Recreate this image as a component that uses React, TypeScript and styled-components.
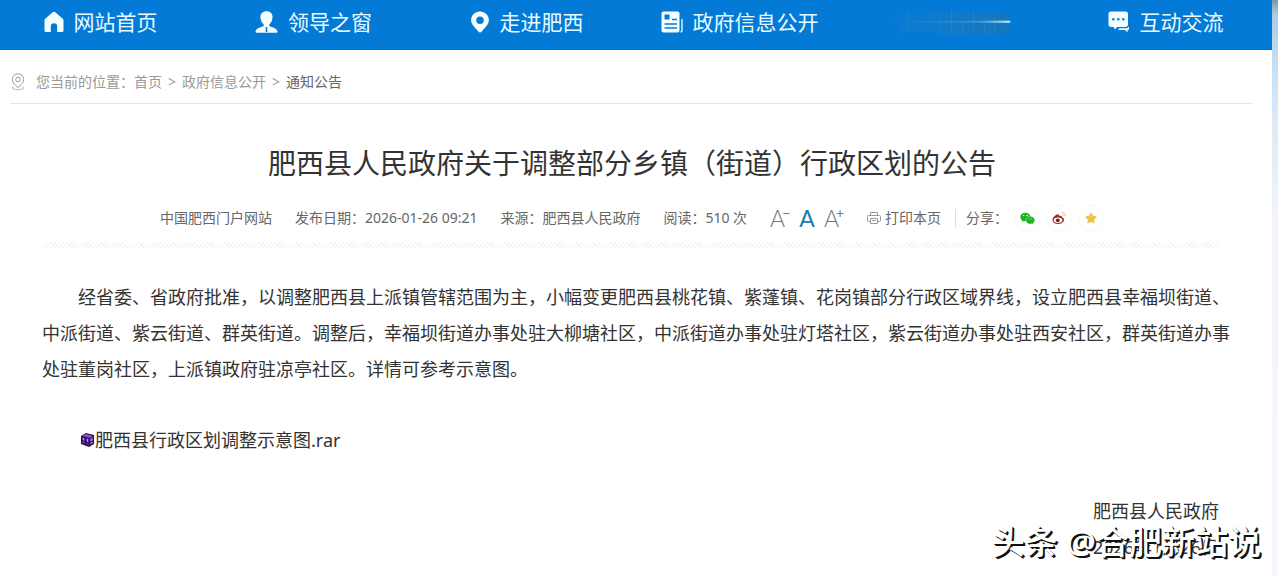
import React from "react";
import styled, { createGlobalStyle } from "styled-components";
import { FaWeixin, FaStar } from "react-icons/fa";

const GlobalStyle = createGlobalStyle`
  * { box-sizing: border-box; }
  body {
    margin: 0;
    background: #fff;
    color: #333;
    font-family: "Noto Sans", "Noto Sans CJK SC", sans-serif;
  }
  a { color: inherit; text-decoration: none; }
`;

const Shell = styled.div`
  position: relative;
  min-height: 100vh;
  padding-right: 6px;
  overflow: hidden;
  background: linear-gradient(#7f95a8 0, #a9cbe6 14px, #c4def2 60px, #dceaf7 120px, #f1f5fb 220px, #f5f7fc 100%);
`;

const Page = styled.div`
  min-height: 100vh;
  background: #fff;
`;

const NavBar = styled.nav`
  height: 50px;
  background: #047ad7;
  border-bottom: 1px solid #0a6fc2;
`;

const NavList = styled.ul`
  display: grid;
  grid-template-columns: repeat(6, 1fr);
  height: 44px;
  margin: 0 0 0 -6px;
  padding: 0;
  list-style: none;
`;

const NavItem = styled.li`
  display: flex;
  align-items: center;
  justify-content: center;
`;

const NavLink = styled.a`
  display: flex;
  align-items: center;
  gap: 10px;
  color: #e9fbff;
  font-size: 21px;
  line-height: 44px;
  white-space: nowrap;

  svg { display: block; flex: none; }
`;

const Breadcrumb = styled.div`
  display: flex;
  align-items: center;
  gap: 6px;
  height: 54px;
  margin: 0 19px 0 10px;
  padding-top: 10px;
  border-bottom: 1px solid #e6e6e6;
  color: #999;
  font-size: 14px;
  line-height: 20px;

  svg { margin-right: 4px; }
`;

const Current = styled.span`
  color: #666;
`;

const Article = styled.article`
  padding: 39px 42px 0;
`;

const Title = styled.h1`
  margin: 0;
  padding-right: 8px;
  text-align: center;
  font-size: 28px;
  font-weight: 400;
  line-height: 40px;
`;

const Meta = styled.div`
  display: flex;
  align-items: center;
  justify-content: center;
  gap: 23px;
  height: 30px;
  margin-top: 20px;
  padding-right: 8px;
  color: #666;
  font-size: 14px;
  line-height: 20px;
  white-space: nowrap;
`;

const Group = styled.div<{ $gap: number }>`
  display: flex;
  align-items: center;
  gap: ${(p) => p.$gap}px;
`;

const SizeButton = styled.button<{ $active?: boolean }>`
  display: flex;
  align-items: flex-start;
  padding: 0;
  border: 0;
  background: none;
  color: ${(p) => (p.$active ? "#1580b0" : "#777")};
  font-family: Lato, sans-serif;
  font-size: 23px;
  font-weight: ${(p) => (p.$active ? 400 : 300)};
  line-height: 24px;

  sup {
    margin-left: -3px;
    font-size: 14px;
    font-weight: 400;
    line-height: 14px;
  }
`;

const PrintButton = styled.button`
  display: flex;
  align-items: center;
  gap: 4px;
  padding: 0;
  border: 0;
  background: none;
  color: inherit;
  font: inherit;
`;

const Share = styled.div`
  display: flex;
  align-items: center;
  padding-left: 11px;
  background: linear-gradient(#ddd, #ddd) left center / 1px 18px no-repeat;
`;

const ShareLink = styled.a<{ $color: string }>`
  display: grid;
  place-items: center;
  width: 26px;
  height: 26px;
  margin-left: 6px;
  border: 1px solid #f8f8f8;
  border-radius: 50%;
  color: ${(p) => p.$color};
`;

const Hatch = styled.div`
  height: 6px;
  margin: 9px 10px 0 0;
  background: repeating-linear-gradient(45deg, #f1f1f1 0 1px, #fff 1px 3px);
`;

const Body = styled.div`
  padding-top: 31px;
  font-size: 18px;
  line-height: 36px;
`;

const Paragraph = styled.p`
  margin: 0 0 35px;
  text-indent: 36px;
`;

const Attachment = styled.p`
  display: flex;
  align-items: center;
  margin: 0 0 35px 38px;
`;

const Signature = styled.div`
  padding-right: 11px;
  text-align: right;
`;

const Watermark = styled.div`
  position: absolute;
  right: 17px;
  bottom: 10px;
  color: #fff;
  font-size: 33px;
  font-weight: 500;
  line-height: 48px;
  white-space: nowrap;
  text-shadow: 1px 1px 0 #111, 2px 2px 0 #111;
`;

const HomeIcon = () => (
  <svg width="20" height="22" viewBox="0 0 20 22" fill="#f4feff" aria-hidden="true">
    <path d="M8.700 1.200a2 2 0 0 1 2.600 0l7.500 6.500c.5.500.7.900.7 1.500V19.500a1.500 1.500 0 0 1-1.500 1.500H13.200v-5.500a3.200 3.200 0 0 0-6.400 0V21H2A1.500 1.500 0 0 1 .5 19.500V9.200c0-.6.2-1 .7-1.500z" />
  </svg>
);

const PersonIcon = () => (
  <svg width="23" height="24" viewBox="0 0 24 24" aria-hidden="true">
    <path fill="#f4feff" d="M12 .8c4 0 6.600 2.800 6.300 6.600-.2 3-1.400 5.500-3.300 6.900v2c1 1 7.600 1.700 8.400 5.400.2.800-.1 1.500-.9 1.500h-21c-.8 0-1.100-.7-.9-1.500C1.400 18 8 17.300 9 16.300v-2C7.100 12.900 5.900 10.400 5.700 7.400 5.400 3.600 8 .8 12 .8z" />
    <path fill="#047ad7" d="m11.200 17.200h1.600l.2 1.200-.5.700.6 2.600-1.100 1.200-1.100-1.200.6-2.600-.5-.7z" />
  </svg>
);

const PinIcon = () => (
  <svg width="20" height="22" viewBox="0 0 20 22" fill="#f4feff" fillRule="evenodd" aria-hidden="true">
    <path d="M10 .5c5 0 8.900 3.800 8.900 8.600 0 4.300-3.700 7.300-7.300 11.600-1 1.100-2.200 1.100-3.200 0C4.800 16.400 1.100 13.400 1.100 9.100 1.100 4.300 5 .5 10 .5zm0 5a3.800 3.800 0 1 0 0 7.600 3.800 3.800 0 0 0 0-7.600z" />
  </svg>
);

const NewsIcon = () => (
  <svg width="22" height="22" viewBox="0 0 22 22" aria-hidden="true">
    <rect x="0.500" y="0.500" width="18" height="21" rx="2" fill="#f4feff" />
    <path d="M21 8v11.500c0 .9-.6 1.500-1.600 1.700" fill="none" stroke="#f4feff" strokeWidth="1.300" />
    <rect x="3.500" y="3.500" width="5" height="5" fill="#047ad7" />
    <path d="M11 8.500h5M3.500 13h12.500M3.500 17h12.500" stroke="#047ad7" strokeWidth="1.600" />
  </svg>
);

const ChatIcon = () => (
  <svg width="22" height="22" viewBox="0 0 22 22" aria-hidden="true">
    <path fill="#f4feff" d="M3 .5h14.500c1.500 0 2.500 1 2.500 2.500v10.500c0 1.500-1 2.500-2.500 2.500H9l-2 2.500L5.500 16H3C1.500 16 .5 15 .5 13.500V3C.5 1.500 1.500.5 3 .5z" />
    <path fill="#f4feff" d="M21 7v10.500c0 1-.6 1.500-1.500 1.500v2.500L17 19h-7l1.500-1.800h6.500c2 0 3-1 3-3z" />
    <g fill="#047ad7">
      <circle cx="5.300" cy="8.300" r="1.200" />
      <circle cx="10.300" cy="8.300" r="1.200" />
      <circle cx="15.300" cy="8.300" r="1.200" />
    </g>
  </svg>
);

const SmearedLabel = () => (
  <svg width="124" height="30" viewBox="0 0 124 30" aria-hidden="true">
    <defs>
      <linearGradient id="haze" x1="0" x2="1" y1="0" y2="0">
        <stop offset="0" stopColor="#2f82b4" stopOpacity="0.100" />
        <stop offset="0.600" stopColor="#2878ac" stopOpacity="0.450" />
        <stop offset="1" stopColor="#1a74b4" stopOpacity="0.700" />
      </linearGradient>
      <linearGradient id="streak" x1="0" x2="1" y1="0" y2="0">
        <stop offset="0" stopColor="#4aa0e0" stopOpacity="0.100" />
        <stop offset="0.700" stopColor="#4fa9de" stopOpacity="0.500" />
        <stop offset="1" stopColor="#b8e8fa" />
      </linearGradient>
    </defs>
    <path fill="url(#haze)" d="M2 8h36v-4h10v3h70v20H44v-3H14v4H8V14H2z" />
    <path stroke="#4a96bd" strokeOpacity="0.350" d="M16.500 5v18M48.500 14v12M60.500 3v22M71.500 14v13M82.500 4v20M93.500 16v11M103.500 8v18" />
    <path fill="url(#streak)" d="M2 14.500 118 13.500l2 1-2 1.500L2 15z" />
  </svg>
);

const PlaceIcon = () => (
  <svg width="16" height="18" viewBox="0 0 16 18" fill="none" stroke="#999" aria-hidden="true">
    <path d="M8 14.500C4.500 11.500 2.300 9.300 2.300 6.500a5.700 5.700 0 0 1 11.400 0c0 2.800-2.200 5-5.700 8z" />
    <circle cx="8" cy="6.500" r="2.300" />
    <path d="M4 13.500c-4 1.500-1.500 3 4 3s8-1.500 4-3" strokeOpacity="0.700" />
  </svg>
);

const PrinterIcon = () => (
  <svg width="14" height="14" viewBox="0 0 14 14" fill="none" stroke="#999" aria-hidden="true">
    <path d="M3.500 4V1.500h7V4M3.500 10.500h-2a1 1 0 0 1-1-1V5.500a1 1 0 0 1 1-1h11a1 1 0 0 1 1 1v4a1 1 0 0 1-1 1h-2M3.500 7.500h7v5h-7zM5 9.500h4" />
  </svg>
);

const WeiboIcon = () => (
  <svg width="15" height="14" viewBox="0 0 15 14" aria-hidden="true">
    <path fill="#a32d2a" d="M6.200 3.200c.9.200 1 .9.700 1.800 1.800-.6 3.200-.4 3.100 1.300 1.300.5 2 1.300 2 2.400C12 11 9.500 13 6 13S.5 11.200.5 9C.5 6.300 4.200 2.800 6.200 3.200z" />
    <ellipse cx="6" cy="9.200" rx="4.200" ry="2.700" fill="#fff" />
    <circle cx="5.800" cy="9.300" r="1.900" fill="#7d1d1c" />
    <path fill="none" stroke="#f3b391" d="M9.800 1.500c2.500-.5 4.300 1.700 3.500 4M10 3.500c1.200-.2 1.900.7 1.600 1.700" />
  </svg>
);

const ArchiveIcon = () => (
  <svg width="15" height="16" viewBox="0 0 15 16" aria-hidden="true">
    <path fill="#25103f" d="m1 4 5-3 8 2v9l-5 3-8-3z" />
    <path fill="#9a4bd0" d="m2 4 4-2 7 2-3 2z" />
    <path fill="#5b31a8" d="m2 5 3 1v6l-3-1zM6 6l3 1v6l-3-1z" />
    <path fill="#7a4fd6" d="m10 7 3-2v6l-3 2z" />
    <path stroke="#c78be8" d="M3.500 6v4M7.500 7v4M11.500 7v4" />
    <path stroke="#1f0d35" d="m1 8 8 3 5-3" fill="none" />
  </svg>
);

const navItems = [
  { label: "网站首页", Icon: HomeIcon },
  { label: "领导之窗", Icon: PersonIcon },
  { label: "走进肥西", Icon: PinIcon },
  { label: "政府信息公开", Icon: NewsIcon },
  { label: "", Icon: SmearedLabel },
  { label: "互动交流", Icon: ChatIcon },
];

export default function App() {
  return (
    <Shell>
      <GlobalStyle />
      <Page>
        <NavBar>
          <NavList>
            {navItems.map(({ label, Icon }, i) => (
              <NavItem key={i}>
                {label ? (
                  <NavLink href="#">
                    <Icon />
                    {label}
                  </NavLink>
                ) : (
                  <Icon />
                )}
              </NavItem>
            ))}
          </NavList>
        </NavBar>

        <Breadcrumb>
          <PlaceIcon />
          <span>
            您当前的位置：<a href="#">首页</a>
          </span>
          <span>&gt;</span>
          <a href="#">政府信息公开</a>
          <span>&gt;</span>
          <Current>通知公告</Current>
        </Breadcrumb>

        <Article>
          <Title>肥西县人民政府关于调整部分乡镇（街道）行政区划的公告</Title>
          <Meta>
            <span>中国肥西门户网站</span>
            <span>发布日期：2026-01-26 09:21</span>
            <span>来源：肥西县人民政府</span>
            <span>阅读：510 次</span>
            <Group $gap={9}>
              <SizeButton type="button">
                A<sup>−</sup>
              </SizeButton>
              <SizeButton type="button" $active>
                A
              </SizeButton>
              <SizeButton type="button">
                A<sup>+</sup>
              </SizeButton>
            </Group>
            <Group $gap={14}>
              <PrintButton type="button">
                <PrinterIcon />
                打印本页
              </PrintButton>
              <Share>
                分享：
                <ShareLink href="#" $color="#1db321" aria-label="微信">
                  <FaWeixin size={15} />
                </ShareLink>
                <ShareLink href="#" $color="#a32d2a" aria-label="微博">
                  <WeiboIcon />
                </ShareLink>
                <ShareLink href="#" $color="#f0c24c" aria-label="收藏">
                  <FaStar size={12} />
                </ShareLink>
              </Share>
            </Group>
          </Meta>
          <Hatch />
          <Body>
            <Paragraph>
              经省委、省政府批准，以调整肥西县上派镇管辖范围为主，小幅变更肥西县桃花镇、紫蓬镇、花岗镇部分行政区域界线，设立肥西县幸福坝街道、中派街道、紫云街道、群英街道。调整后，幸福坝街道办事处驻大柳塘社区，中派街道办事处驻灯塔社区，紫云街道办事处驻西安社区，群英街道办事处驻董岗社区，上派镇政府驻凉亭社区。详情可参考示意图。
            </Paragraph>
            <Attachment>
              <ArchiveIcon />
              <a href="#">肥西县行政区划调整示意图.rar</a>
            </Attachment>
            <Signature>
              <div>肥西县人民政府</div>
              <div>2026年1月26日</div>
            </Signature>
          </Body>
        </Article>
      </Page>
      <Watermark>头条 @合肥新站说</Watermark>
    </Shell>
  );
}
